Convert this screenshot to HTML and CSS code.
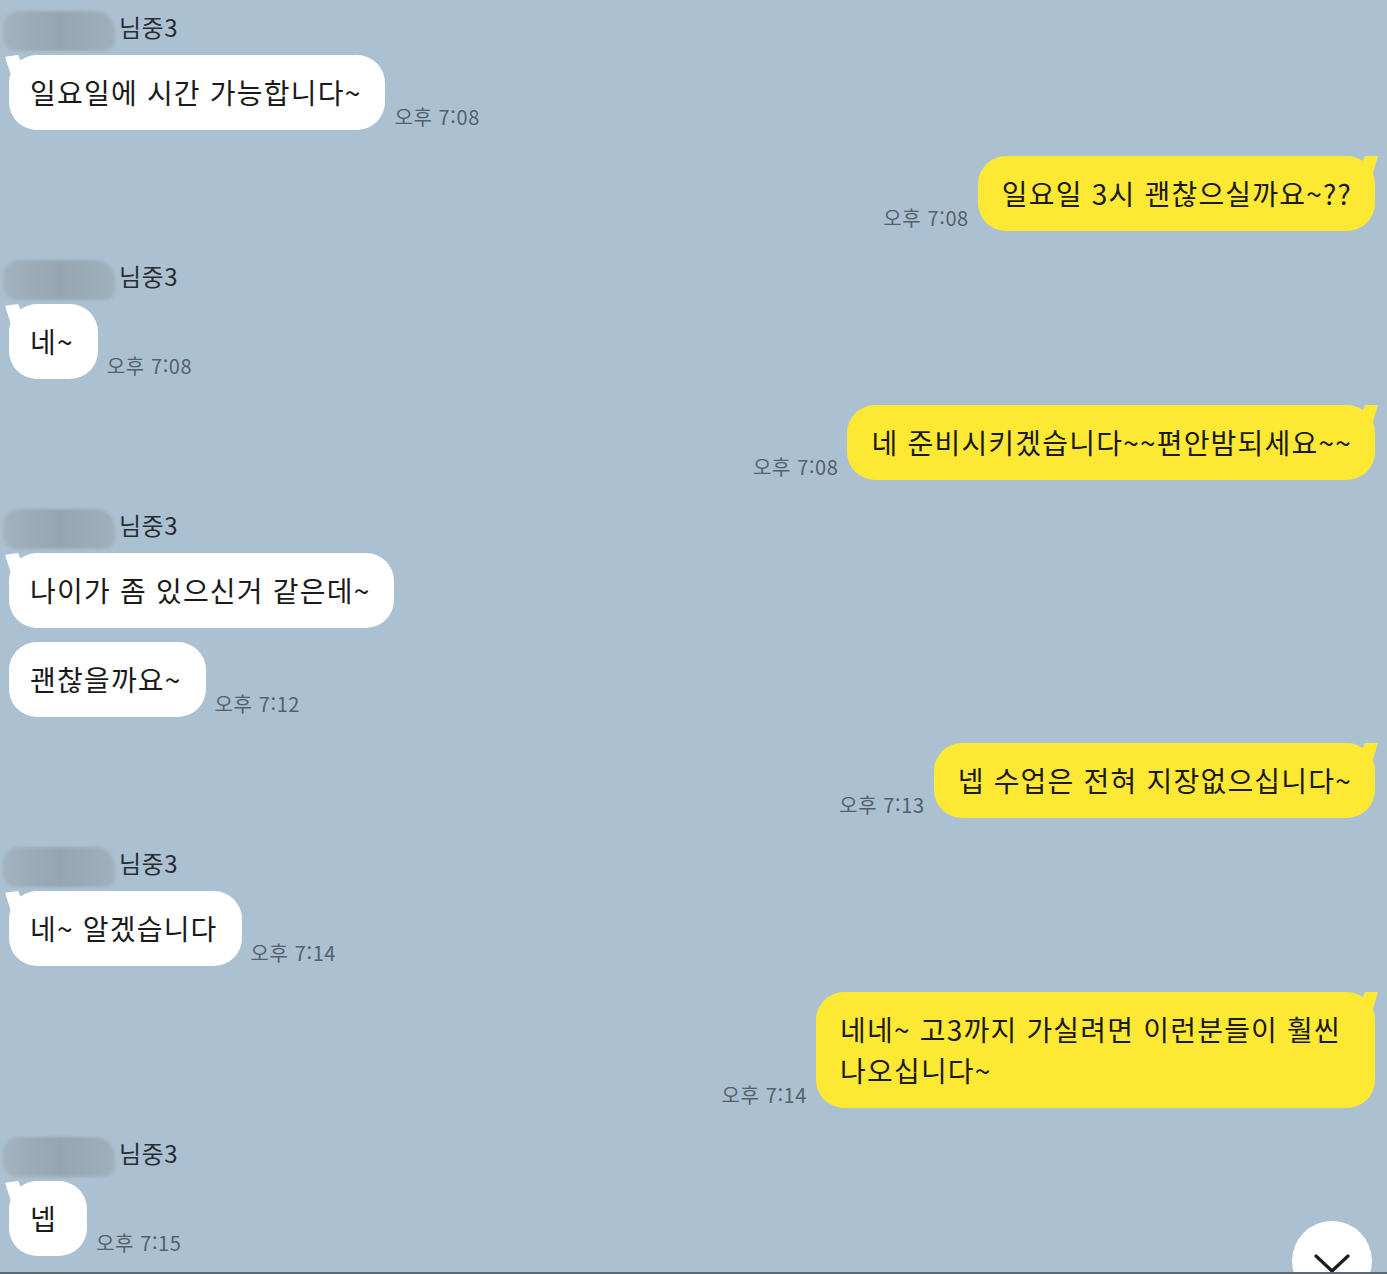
FILE: index.html
```html
<!DOCTYPE html>
<html lang="ko">
<head>
<meta charset="utf-8">
<title>채팅</title>
<link rel="stylesheet" href="styles.css">
</head>
<body>
<main class="chat">
  <section class="group in">
    <div class="name"><span class="redact"></span><span class="name-text">님중3</span></div>
    <div class="row"><div class="bubble tail">일요일에 시간 가능합니다~</div><span class="time">오후 7:08</span></div>
  </section>
  <section class="group out">
    <div class="row"><span class="time">오후 7:08</span><div class="bubble tail">일요일 3시 괜찮으실까요~??</div></div>
  </section>
  <section class="group in">
    <div class="name"><span class="redact"></span><span class="name-text">님중3</span></div>
    <div class="row"><div class="bubble tail">네~</div><span class="time">오후 7:08</span></div>
  </section>
  <section class="group out">
    <div class="row"><span class="time">오후 7:08</span><div class="bubble tail">네 준비시키겠습니다~~편안밤되세요~~</div></div>
  </section>
  <section class="group in">
    <div class="name"><span class="redact"></span><span class="name-text">님중3</span></div>
    <div class="row"><div class="bubble tail">나이가 좀 있으신거 같은데~</div></div>
    <div class="row"><div class="bubble">괜찮을까요~</div><span class="time">오후 7:12</span></div>
  </section>
  <section class="group out">
    <div class="row"><span class="time">오후 7:13</span><div class="bubble tail">넵 수업은 전혀 지장없으십니다~</div></div>
  </section>
  <section class="group in">
    <div class="name"><span class="redact"></span><span class="name-text">님중3</span></div>
    <div class="row"><div class="bubble tail">네~ 알겠습니다</div><span class="time">오후 7:14</span></div>
  </section>
  <section class="group out">
    <div class="row"><span class="time">오후 7:14</span><div class="bubble tail wide">네네~ 고3까지 가실려면 이런분들이 훨씬 나오십니다~</div></div>
  </section>
  <section class="group in">
    <div class="name"><span class="redact"></span><span class="name-text">님중3</span></div>
    <div class="row"><div class="bubble tail">넵</div><span class="time">오후 7:15</span></div>
  </section>
</main>
<button class="scroll-down" aria-label="아래로">
  <svg width="36" height="20" viewBox="0 0 36 20"><path d="M2 2 L18 17 L34 2" fill="none" stroke="#1b1b1b" stroke-width="3.2" stroke-linecap="round" stroke-linejoin="round"/></svg>
</button>
<div class="bottom-line"></div>
</body>
</html>
```
FILE: styles.css
```css
html, body {
  margin: 0;
  padding: 0;
}
body {
  background: #abc1d2;
  font-family: "Noto Sans CJK KR", "Noto Sans", sans-serif;
  color: #1a1a1a;
  width: 1387px;
  height: 1274px;
  overflow: hidden;
}
.chat {
  padding: 8px 12px 0 9px;
  display: flex;
  flex-direction: column;
}
.group {
  display: flex;
  flex-direction: column;
  gap: 14px;
  margin-bottom: 26px;
}
.name {
  display: flex;
  align-items: center;
  height: 30px;
  margin-top: 4px;
  margin-bottom: -1px;
  position: relative;
}
.redact {
  width: 112px;
  height: 40px;
  margin-left: -6px;
  margin-right: 1px;
  margin-top: 8px;
  border-radius: 16px 20px 10px 14px;
  background: linear-gradient(90deg, #a2b2bf 0%, #95a5b2 50%, #9fb0bd 100%);
  filter: blur(1.5px);
}
.name-text {
  font-size: 24px;
  line-height: 30px;
  letter-spacing: 0.5px;
  color: #2a2e33;
  padding-left: 3px;
}
.row {
  display: flex;
  align-items: flex-end;
  gap: 9px;
}
.out .row {
  justify-content: flex-end;
}
.bubble {
  position: relative;
  font-size: 28px;
  line-height: 41px;
  letter-spacing: 1.2px;
  padding: 17px 24px 17px 21px;
  min-width: 33px;
  border-radius: 28px;
  background: #ffffff;
  white-space: pre-wrap;
}
.out .bubble {
  background: #fde834;
  padding: 17px 23px 17px 24px;
}
.bubble.wide {
  max-width: 512px;
}
.bubble.tail::before {
  content: "";
  position: absolute;
  top: 0;
  width: 22px;
  height: 22px;
  background: inherit;
}
.in .bubble.tail::before {
  left: -4px;
  clip-path: polygon(0 8%, 60% 0, 100% 100%, 30% 100%);
  border-radius: 4px 0 0 0;
}
.out .bubble.tail::before {
  right: -3px;
  clip-path: polygon(40% 0, 100% 0, 70% 100%, 0 100%);
}
.time {
  font-size: 20px;
  line-height: 22px;
  letter-spacing: 0.6px;
  color: #56606b;
  margin-bottom: 2px;
  white-space: nowrap;
}
.scroll-down {
  position: fixed;
  left: 1292px;
  top: 1221px;
  width: 80px;
  height: 80px;
  border: none;
  border-radius: 50%;
  background: #ffffff;
  padding: 33px 0 0 0;
  display: flex;
  justify-content: center;
  align-items: flex-start;
}
.bottom-line {
  position: fixed;
  left: 0;
  bottom: 0;
  width: 100%;
  height: 2px;
  background: #5d6873;
}
```
